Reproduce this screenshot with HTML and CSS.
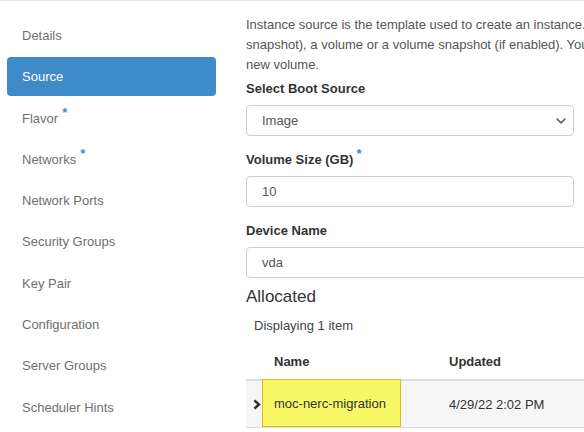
FILE: index.html
```
<!DOCTYPE html>
<html lang="en">
<head>
<meta charset="utf-8">
<title>Launch Instance - Source</title>
<link rel="stylesheet" href="styles.css">
</head>
<body>
<div class="page">
  <nav class="side">
    <ul class="pills">
      <li><a>Details</a></li>
      <li class="active"><a>Source</a></li>
      <li><a>Flavor<span class="req">*</span></a></li>
      <li><a>Networks<span class="req">*</span></a></li>
      <li><a>Network Ports</a></li>
      <li><a>Security Groups</a></li>
      <li><a>Key Pair</a></li>
      <li><a>Configuration</a></li>
      <li><a>Server Groups</a></li>
      <li><a>Scheduler Hints</a></li>
    </ul>
  </nav>
  <main class="content">
    <p class="help">Instance source is the template used to create an instance. You can use an image, a snapshot of an instance (image<br>snapshot), a volume or a volume snapshot (if enabled). You can also choose to use persistent storage by creating a<br>new volume.</p>
    <div class="form">
      <div class="group">
        <label class="lbl">Select Boot Source</label>
        <div class="field select">
          <span>Image</span>
          <svg class="caret" width="10" height="6" viewBox="0 0 10 6"><polyline points="1.2,1.2 5,4.8 8.8,1.2" fill="none" stroke="#666" stroke-width="1.7" stroke-linecap="round" stroke-linejoin="round"/></svg>
        </div>
      </div>
      <div class="group">
        <label class="lbl">Volume Size (GB)<span class="req">*</span></label>
        <div class="field">10</div>
      </div>
      <div class="group">
        <label class="lbl">Device Name</label>
        <div class="field wide">vda</div>
      </div>
    </div>
    <h3 class="sect">Allocated</h3>
    <div class="count">Displaying 1 item</div>
    <div class="table">
      <div class="thead">
        <div class="cell"></div>
        <div class="cell th">Name</div>
        <div class="cell th">Updated</div>
      </div>
      <div class="trow">
        <div class="cell expander">
          <svg width="8" height="11" viewBox="0 0 8 11"><polyline points="1.4,1.3 6,5.5 1.4,9.7" fill="none" stroke="#2b2b2b" stroke-width="2.4" stroke-linejoin="miter"/></svg>
        </div>
        <div class="cell name"><span class="hl">moc-nerc-migration</span></div>
        <div class="cell td">4/29/22 2:02 PM</div>
      </div>
    </div>
  </main>
</div>
</body>
</html>
```
FILE: styles.css
```
html, body {
  margin: 0;
  padding: 0;
  background: #fff;
  overflow: hidden;
}

body {
  font-family: "Liberation Sans", Arial, sans-serif;
  font-size: 13px;
  color: #333;
  width: 584px;
  height: 432px;
}

.page {
  display: flex;
  border-top: 1px solid #e5e5e5;
  height: 431px;
}

.side {
  flex: none;
  width: 209px;
  padding-left: 7px;
}

.pills {
  list-style: none;
  margin: 15px 0 0;
  padding: 0;
  display: flex;
  flex-direction: column;
  gap: 2.3px;
}

.pills a {
  display: block;
  line-height: 19px;
  padding: 10px 15px;
  border-radius: 4px;
  color: #6f6f6f;
  text-decoration: none;
}

.pills .active a {
  background: #3f8ac9;
  color: #fff;
}

.req {
  color: #3f8ac9;
  font-weight: bold;
  font-size: 13px;
  margin-left: 4px;
  vertical-align: 6px;
  line-height: 0;
}

.lbl .req {
  margin-left: 3px;
}

.content {
  flex: 1;
  min-width: 0;
  margin-left: 30px;
  overflow: hidden;
}

.help {
  margin: 14px 0 0;
  line-height: 20px;
  white-space: nowrap;
  color: #555;
}

.form {
  display: flex;
  flex-direction: column;
  gap: 15px;
  margin-top: 5px;
}

.lbl {
  display: block;
  font-weight: bold;
  line-height: 18px;
  margin-bottom: 7px;
  color: #333;
}

.field {
  display: flex;
  align-items: center;
  box-sizing: border-box;
  width: 328px;
  height: 31px;
  padding: 0 15px;
  border: 1px solid #cfcfcf;
  border-radius: 4px;
  color: #555;
  background: #fff;
}

.select {
  padding-right: 7px;
}

.caret {
  margin-left: auto;
}

.wide {
  width: 380px;
}

.sect {
  margin: 9px 0 0;
  font-size: 17px;
  font-weight: normal;
  line-height: 20px;
  color: #333;
}

.count {
  margin: 10px 0 0 8px;
  line-height: 18px;
  color: #444;
}

.table {
  margin-top: 8px;
  width: 338px;
}

.thead, .trow {
  display: grid;
  grid-template-columns: 16px 175px 1fr;
  align-items: center;
}

.thead {
  height: 36px;
  border-bottom: 2px solid #dedede;
}

.th {
  font-weight: bold;
  padding-left: 12px;
}

.trow {
  height: 46px;
  border-bottom: 1px solid #dedede;
  background: #f6f6f6;
}

.expander {
  display: flex;
  align-items: center;
  padding-left: 7px;
}

.name {
  position: relative;
  height: 100%;
}

.hl {
  position: absolute;
  left: 0;
  top: -2px;
  width: 139px;
  height: 48px;
  box-sizing: border-box;
  display: flex;
  align-items: center;
  padding-left: 11px;
  background: #f8f867;
  border: 1px solid #e2b91c;
  color: #333;
}

.td {
  padding-left: 12px;
}
```
